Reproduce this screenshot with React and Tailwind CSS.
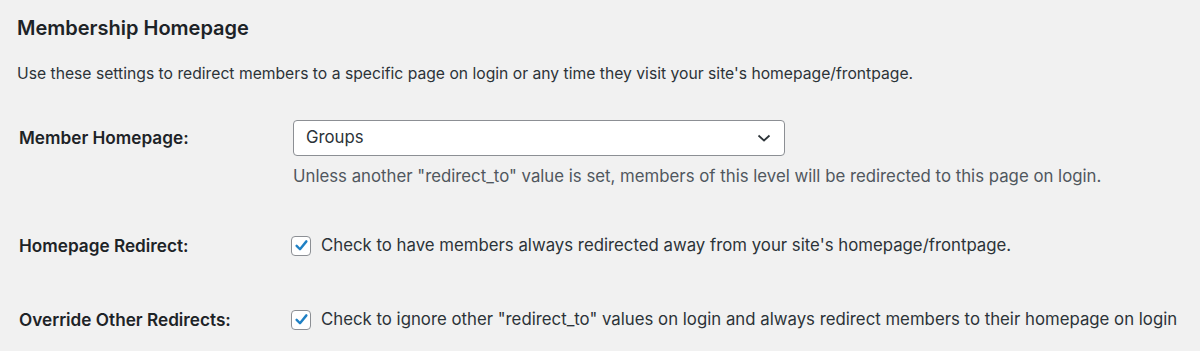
import React from "react";

function Check({ label }) {
  return (
    <label className="flex items-center gap-[10px]">
      <span className="flex h-[20px] w-[20px] items-center justify-center rounded-[4px] border border-[#8c8f94] bg-white">
        <svg width="15" height="15" viewBox="0 0 20 20">
          <path d="M3.5 10.5 L8 15 L16.5 4.5" fill="none" stroke="#1f80c4" strokeWidth="3.2" strokeLinecap="round" strokeLinejoin="round" />
        </svg>
      </span>
      <span className="text-[#2c3338]">{label}</span>
    </label>
  );
}

export default function App() {
  return (
    <div className="h-[351px] w-[1200px] overflow-hidden bg-[#f1f1f1] pl-[17px] pt-[15px] text-[16.8px] font-['Inter',sans-serif] text-[#1d2327]">
      <h2 className="text-[20px] font-semibold leading-[26px] text-[#1d2327]">Membership Homepage</h2>
      <p className="mt-[23px] text-[15.7px] leading-[20px] text-[#2c3338]">
        Use these settings to redirect members to a specific page on login or any time they visit your site's homepage/frontpage.
      </p>

      <div className="mt-[36px] flex">
        <div className="w-[276px] pl-[2px] pt-[8px] text-[17.2px] font-semibold leading-[20px]">Member Homepage:</div>
        <div>
          <div className="flex h-[36px] w-[492px] items-center justify-between rounded-[4px] border border-[#8c8f94] bg-white pl-[12px] pr-[12px]">
            <span className="text-[#2c3338]">Groups</span>
            <svg width="16" height="16" viewBox="0 0 16 16">
              <path d="M2.5 5.5 L8 10.5 L13.5 5.5" fill="none" stroke="#2c3338" strokeWidth="1.7" />
            </svg>
          </div>
          <p className="mt-[10px] leading-[20px] text-[#50575e]">
            Unless another "redirect_to" value is set, members of this level will be redirected to this page on login.
          </p>
        </div>
      </div>

      <div className="mt-[47px] flex items-center">
        <div className="w-[274px] pl-[2px] text-[17.2px] font-semibold leading-[20px]">Homepage Redirect:</div>
        <Check label="Check to have members always redirected away from your site's homepage/frontpage." />
      </div>

      <div className="mt-[49px] flex items-center">
        <div className="w-[274px] pl-[2px] text-[17.2px] font-semibold leading-[20px]">Override Other Redirects:</div>
        <Check label={'Check to ignore other "redirect_to" values on login and always redirect members to their homepage on login'} />
      </div>
    </div>
  );
}
